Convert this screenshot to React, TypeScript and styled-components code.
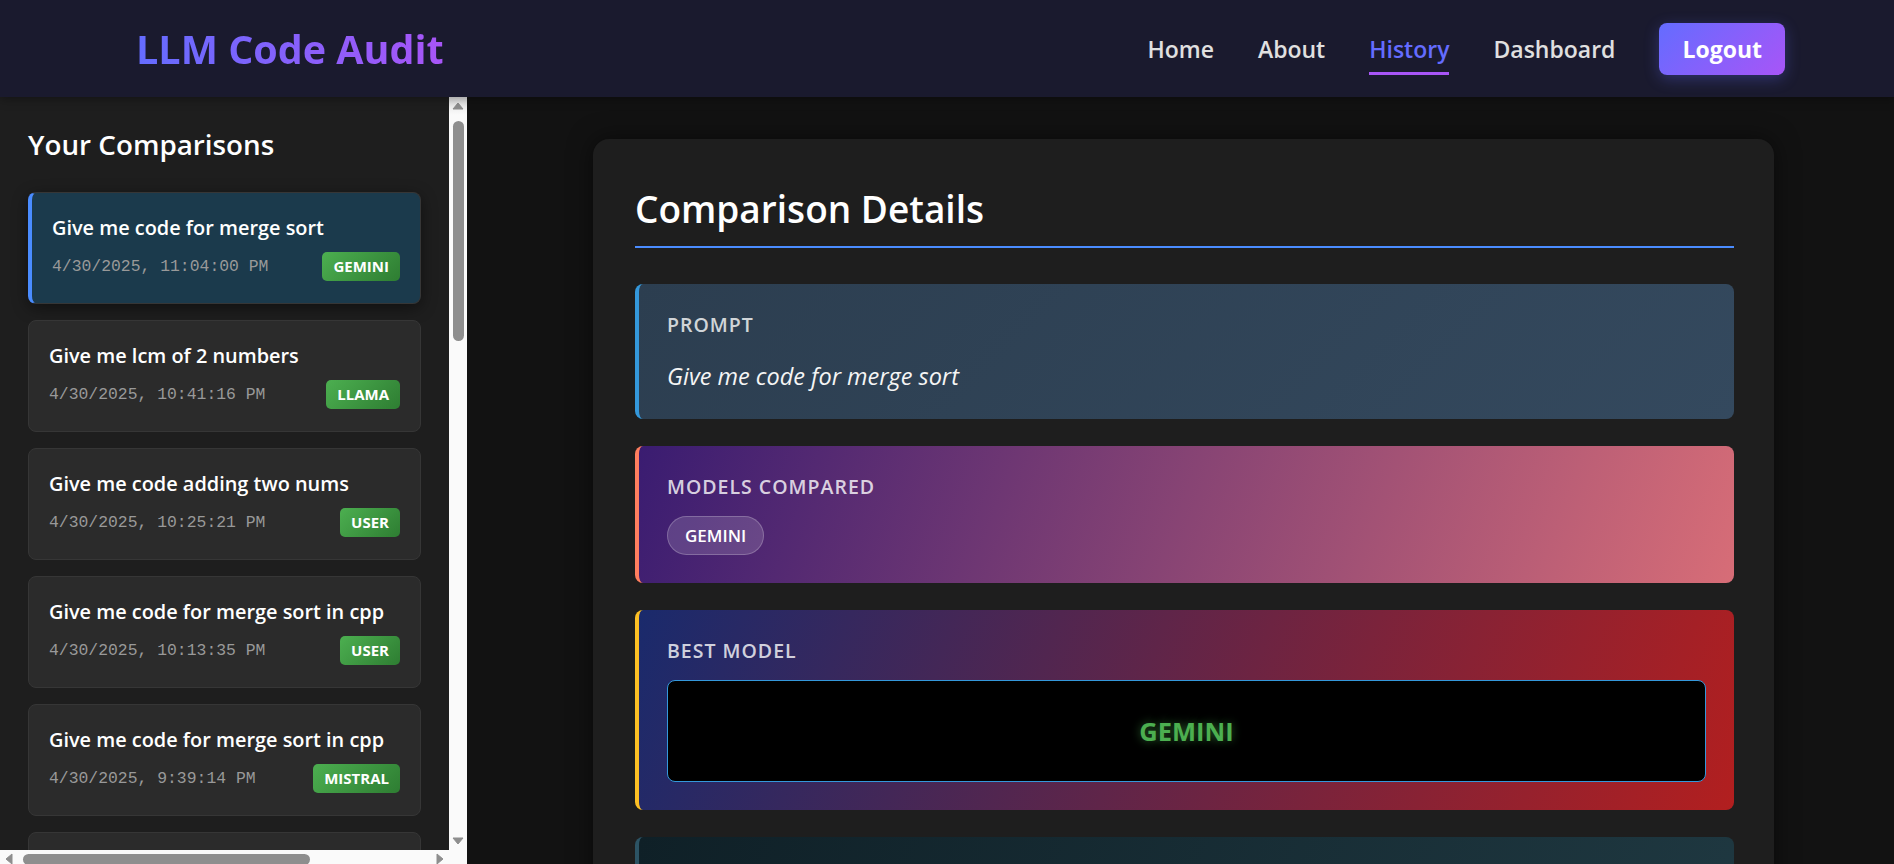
import React from "react";
import styled, { createGlobalStyle, css } from "styled-components";

const GlobalStyle = createGlobalStyle`
  html, body { margin: 0; padding: 0; height: 100%; overflow: hidden; background: #121212; }
  body { font-family: "Open Sans", "Noto Sans", sans-serif; color: #fff; }
  * { box-sizing: border-box; }
`;

const Header = styled.header`
  height: 97px;
  background: #1a1a2e;
  display: flex;
  align-items: center;
  justify-content: space-between;
  padding: 1px 109px 0 136px;
  box-shadow: 0 2px 10px rgba(0, 0, 0, 0.35);
  position: relative;
  z-index: 2;
`;

const Logo = styled.h1`
  margin: 0;
  font-size: 39.5px;
  font-weight: 700;
  background: linear-gradient(90deg, #646cff, #a855f7);
  -webkit-background-clip: text;
  background-clip: text;
  color: transparent;
`;

const Nav = styled.nav`
  display: flex;
  align-items: center;
  gap: 44px;
`;

const NavLink = styled.a<{ $active?: boolean }>`
  position: relative;
  font-size: 23px;
  font-weight: 600;
  color: ${(p) => (p.$active ? "#646cff" : "#e0e0e0")};
  text-decoration: none;
  cursor: pointer;
  ${(p) =>
    p.$active &&
    css`
      &::after {
        content: "";
        position: absolute;
        left: 0;
        right: 0;
        bottom: -10px;
        height: 3px;
        background: #a855f7;
      }
    `}
`;

const LogoutButton = styled.button`
  height: 52px;
  padding: 0 23px;
  border: none;
  border-radius: 8px;
  background: linear-gradient(135deg, #646cff, #a855f7);
  color: #fff;
  font-family: inherit;
  font-size: 23px;
  font-weight: 700;
  box-shadow: 0 4px 15px rgba(100, 108, 255, 0.3);
  cursor: pointer;
`;

const Layout = styled.div`
  display: flex;
  height: 771px;
`;

/* ---------- sidebar with its scrollbars ---------- */

const SidebarFrame = styled.aside`
  flex: none;
  width: 467px;
  height: 100%;
  display: grid;
  grid-template-columns: 449px 18px;
  grid-template-rows: 1fr 18px;
`;

const SidebarViewport = styled.div`
  background: #1e1e1e;
  overflow: hidden;
  padding: 28px 0 0 28px;
`;

const VScrollbar = styled.div`
  background: #fafafa;
  display: flex;
  flex-direction: column;
`;

const HScrollbar = styled.div`
  background: #fafafa;
  display: flex;
  flex-direction: row;
`;

const ScrollCorner = styled.div`
  background: #fafafa;
`;

const ScrollButton = styled.div<{ $shade?: boolean }>`
  flex: none;
  width: 18px;
  height: 18px;
  display: flex;
  align-items: center;
  justify-content: center;
  background: ${(p) => (p.$shade ? "linear-gradient(#e2e2e2, #fafafa)" : "#fafafa")};
`;

const VTrack = styled.div`
  flex: 1;
  padding: 6px 0 0 4px;
`;

const HTrack = styled.div`
  flex: 1;
  padding: 4px 0 0 5px;
`;

const Thumb = styled.div<{ $horizontal?: boolean }>`
  background: #8e8e8e;
  border-radius: 6px;
  width: ${(p) => (p.$horizontal ? "287px" : "11px")};
  height: ${(p) => (p.$horizontal ? "11px" : "220px")};
`;

const Arrow = ({ dir }: { dir: "up" | "down" | "left" | "right" }) => {
  const rot = { up: 0, right: 90, down: 180, left: 270 }[dir];
  return (
    <svg width="12" height="12" viewBox="0 0 12 12" style={{ transform: `rotate(${rot}deg)` }}>
      <polygon points="1,9 6,3 11,9" fill="#8e8e8e" stroke="#8e8e8e" strokeWidth="1" strokeLinejoin="round" />
    </svg>
  );
};

const SidebarTitle = styled.h2`
  margin: 0 0 28px;
  font-size: 27.8px;
  font-weight: 600;
  line-height: 39px;
  color: #fff;
`;

const HistoryList = styled.div`
  width: 393px;
  display: flex;
  flex-direction: column;
  gap: 16px;
`;

const HistoryCard = styled.div<{ $active?: boolean }>`
  background: ${(p) => (p.$active ? "#1b3a4c" : "#2b2b2b")};
  border: 1px solid #363636;
  border-left: ${(p) => (p.$active ? "4px solid #4a8cff" : "1px solid #363636")};
  border-radius: 8px;
  padding: 22px 20px 22px;
  min-height: 112px;
  box-shadow: ${(p) => (p.$active ? "0 4px 16px rgba(0, 0, 0, 0.45)" : "none")};
  cursor: pointer;
`;

const CardTitle = styled.div`
  font-size: 19.9px;
  font-weight: 600;
  line-height: 26px;
  color: #fff;
  margin-bottom: 11px;
  white-space: nowrap;
`;

const CardFooter = styled.div`
  display: flex;
  justify-content: space-between;
  align-items: center;
`;

const DateText = styled.span`
  font-family: "Liberation Mono", "Courier New", monospace;
  font-size: 16.4px;
  color: #999;
`;

const Badge = styled.span`
  height: 29px;
  line-height: 29px;
  padding: 0 11px;
  border-radius: 5px;
  background: linear-gradient(135deg, #4caf50, #2e7d32);
  color: #fff;
  font-size: 15px;
  font-weight: 700;
  text-transform: uppercase;
`;

/* ---------- main detail ---------- */

const Main = styled.main`
  flex: 1;
  background: #121212;
  overflow: hidden;
  padding: 42px 0 0 126px;
`;

const DetailCard = styled.section`
  width: 1181px;
  background: #1e1e1e;
  border-radius: 16px;
  padding: 40px 40px 40px 42px;
  box-shadow: 0 0 24px rgba(0, 0, 0, 0.5);
  min-height: 1400px;
`;

const DetailTitle = styled.h2`
  margin: 3px 0 36px;
  padding-bottom: 10px;
  border-bottom: 2px solid #4a8cff;
  font-size: 37px;
  font-weight: 600;
  line-height: 54px;
  color: #fff;
`;

const Sections = styled.div`
  display: flex;
  flex-direction: column;
  gap: 27px;
`;

const variants = {
  prompt: { bg: "linear-gradient(135deg, #2c3e50, #34495e)", edge: "#3498db", bottom: 24 },
  models: { bg: "linear-gradient(110deg, #3a1c71, #d76d77)", edge: "#ff7e5f", bottom: 28 },
  best: { bg: "linear-gradient(110deg, #1a2a6c, #b21f1f)", edge: "#fbbf24", bottom: 28 },
  code: { bg: "linear-gradient(110deg, #0f2027, #203a43)", edge: "#2c5364", bottom: 28 },
};

type Variant = keyof typeof variants;

const Section = styled.div<{ $variant: Variant }>`
  background: ${(p) => variants[p.$variant].bg};
  border-left: 4px solid ${(p) => variants[p.$variant].edge};
  border-radius: 8px;
  padding: 28px 28px ${(p) => variants[p.$variant].bottom}px;
  min-height: ${(p) => (p.$variant === "code" ? "400px" : "0")};
`;

const SectionLabel = styled.div`
  font-size: 19.5px;
  font-weight: 600;
  letter-spacing: 1px;
  line-height: 26px;
  text-transform: uppercase;
  color: rgba(255, 255, 255, 0.8);
  margin-bottom: 16px;
`;

const PromptText = styled.p`
  margin: 0;
  padding-top: 3px;
  font-size: 23.5px;
  font-style: italic;
  line-height: 38px;
  color: #f5f5f5;
`;

const ChipRow = styled.div`
  display: flex;
  gap: 10px;
`;

const Chip = styled.span`
  height: 39px;
  line-height: 37px;
  padding: 0 17px;
  border-radius: 20px;
  background: rgba(255, 255, 255, 0.15);
  border: 1px solid rgba(255, 255, 255, 0.22);
  font-size: 17px;
  font-weight: 600;
  color: #fff;
`;

const BestBox = styled.div`
  background: #000;
  border: 1px solid #3498db;
  border-radius: 8px;
  padding: 32px;
  text-align: center;
  font-size: 25.5px;
  font-weight: 700;
  line-height: 36px;
  color: #4caf50;
  text-shadow: 0 0 10px rgba(76, 175, 80, 0.55);
`;

const history = [
  { prompt: "Give me code for merge sort", date: "4/30/2025, 11:04:00 PM", model: "gemini" },
  { prompt: "Give me lcm of 2 numbers", date: "4/30/2025, 10:41:16 PM", model: "llama" },
  { prompt: "Give me code adding two nums", date: "4/30/2025, 10:25:21 PM", model: "user" },
  { prompt: "Give me code for merge sort in cpp", date: "4/30/2025, 10:13:35 PM", model: "user" },
  { prompt: "Give me code for merge sort in cpp", date: "4/30/2025, 9:39:14 PM", model: "mistral" },
];

export default function App() {
  return (
    <>
      <GlobalStyle />
      <Header>
        <Logo>LLM Code Audit</Logo>
        <Nav>
          <NavLink>Home</NavLink>
          <NavLink>About</NavLink>
          <NavLink $active>History</NavLink>
          <NavLink>Dashboard</NavLink>
          <LogoutButton>Logout</LogoutButton>
        </Nav>
      </Header>
      <Layout>
        <SidebarFrame>
          <SidebarViewport>
            <SidebarTitle>Your Comparisons</SidebarTitle>
            <HistoryList>
              {history.map((h, i) => (
                <HistoryCard key={i} $active={i === 0}>
                  <CardTitle>{h.prompt}</CardTitle>
                  <CardFooter>
                    <DateText>{h.date}</DateText>
                    <Badge>{h.model}</Badge>
                  </CardFooter>
                </HistoryCard>
              ))}
              <HistoryCard />
            </HistoryList>
          </SidebarViewport>
          <VScrollbar>
            <ScrollButton $shade>
              <Arrow dir="up" />
            </ScrollButton>
            <VTrack>
              <Thumb />
            </VTrack>
            <ScrollButton>
              <Arrow dir="down" />
            </ScrollButton>
          </VScrollbar>
          <HScrollbar>
            <ScrollButton>
              <Arrow dir="left" />
            </ScrollButton>
            <HTrack>
              <Thumb $horizontal />
            </HTrack>
            <ScrollButton>
              <Arrow dir="right" />
            </ScrollButton>
          </HScrollbar>
          <ScrollCorner />
        </SidebarFrame>
        <Main>
          <DetailCard>
            <DetailTitle>Comparison Details</DetailTitle>
            <Sections>
              <Section $variant="prompt">
                <SectionLabel>Prompt</SectionLabel>
                <PromptText>Give me code for merge sort</PromptText>
              </Section>
              <Section $variant="models">
                <SectionLabel>Models Compared</SectionLabel>
                <ChipRow>
                  <Chip>GEMINI</Chip>
                </ChipRow>
              </Section>
              <Section $variant="best">
                <SectionLabel>Best Model</SectionLabel>
                <BestBox>GEMINI</BestBox>
              </Section>
              <Section $variant="code" />
            </Sections>
          </DetailCard>
        </Main>
      </Layout>
    </>
  );
}
